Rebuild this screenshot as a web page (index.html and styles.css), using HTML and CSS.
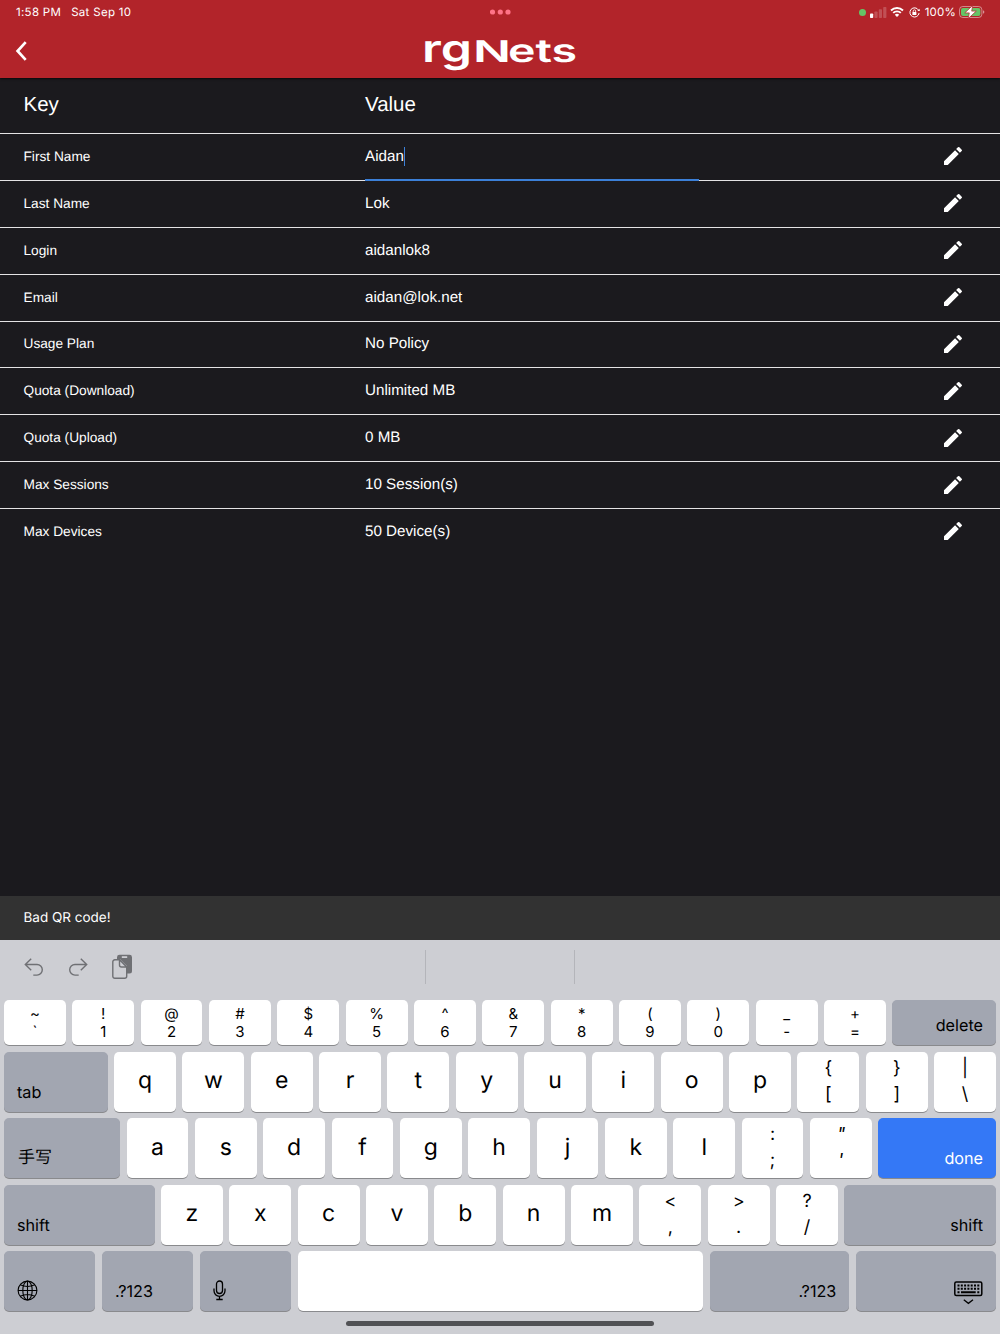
FILE: index.html
```html
<!DOCTYPE html>
<html lang="en">
<head>
<meta charset="UTF-8">
<meta name="viewport" content="width=device-width, initial-scale=1.0">
<title>rgNets</title>
<link rel="stylesheet" href="styles.css">
</head>
<body>
<svg class="defs" width="0" height="0">
    <symbol id="pencil" viewBox="0 0 24 24"><path d="M3 17.25V21h3.75L17.81 9.94l-3.75-3.75L3 17.25zM20.71 7.04a1 1 0 0 0 0-1.41l-2.34-2.34a1 1 0 0 0-1.41 0l-1.83 1.83 3.75 3.75 1.83-1.83z"/></symbol>
</svg>

<header class="top">
    <div class="status">
        <div class="status-left"><span class="time">1:58 PM</span><span class="date">Sat Sep 10</span></div>
        <svg class="dots" width="22" height="6" viewBox="0 0 22 6"><circle cx="2.500" cy="3" r="2.600"/><circle cx="10.300" cy="3" r="2.600"/><circle cx="18" cy="3" r="2.600"/></svg>
        <div class="status-right">
            <span class="camera"></span>
            <svg class="signal" width="17" height="11" viewBox="0 0 17 11"><rect x="0" y="6.5" width="3.2" height="4.5" rx=".8"/><g opacity=".2"><rect x="4.4" y="4.5" width="3.2" height="6.5" rx=".8"/><rect x="8.8" y="2.3" width="3.2" height="8.7" rx=".8"/><rect x="13.2" y="0" width="3.2" height="11" rx=".8"/></g></svg>
            <svg class="wifi" width="14" height="10" viewBox="0 0 14 10"><path d="M1 3.5a8.6 8.6 0 0 1 12 0M3.2 5.9a5.4 5.4 0 0 1 7.6 0" fill="none" stroke="#fff" stroke-width="1.9"/><path d="M7 10 4.8 7.8a3.2 3.2 0 0 1 4.4 0z"/></svg>
            <svg class="lock" width="11" height="11" viewBox="0 0 11 11"><path d="M9.5 3.1A4.6 4.6 0 1 0 10.1 6" fill="none" stroke="#fff" stroke-width="1"/><path d="M8.3 4.1h2.6L10.5 1.7z"/><rect x="3.4" y="4.9" width="4" height="3.1" rx=".5"/><path d="M4.2 5V4a1.2 1.2 0 0 1 2.4 0v1" fill="none" stroke="#fff" stroke-width=".8"/></svg>
            <span class="percent">100%</span>
            <svg class="battery" width="26" height="14" viewBox="0 0 26 14"><rect x=".5" y="1.500" width="22.400" height="11" rx="3.300" fill="none" stroke="#fff" stroke-opacity=".45"/><rect x="2" y="3" width="19.400" height="8" rx="2" fill="#65c466"/><path d="M24 5.200v3.600q1.400-.5 1.400-1.800T24 5.200z" opacity=".5"/><path d="M13.700.4 5.800 7.900h4.500L9.200 13.600l8.100-7.500h-4.600z" stroke="#b2242a" stroke-width=".7"/></svg>
        </div>
    </div>
    <div class="appbar">
        <svg class="back" width="12" height="20" viewBox="0 0 12 20"><path d="M10.700 1.200 2.600 10l8.100 8.800" fill="none" stroke="#fff" stroke-width="2.700"/></svg>
        <svg class="logo" width="154" height="40" viewBox="0 0 154 40">
            <text x="-1" y="30.500" font-size="38" textLength="50" lengthAdjust="spacingAndGlyphs">rg</text>
            <text x="50" y="30.500" font-size="30" textLength="38" lengthAdjust="spacingAndGlyphs">N</text>
            <text x="85" y="30.500" font-size="32" textLength="69" lengthAdjust="spacingAndGlyphs">ets</text>
        </svg>
    </div>
</header>

<main class="table">
    <div class="row head"><span>Key</span><span>Value</span></div>
    <div class="row"><span class="key">First Name</span><span class="value active">Aidan<i class="caret"></i></span><svg class="edit"><use href="#pencil"/></svg></div>
    <div class="row"><span class="key">Last Name</span><span class="value">Lok</span><svg class="edit"><use href="#pencil"/></svg></div>
    <div class="row"><span class="key">Login</span><span class="value">aidanlok8</span><svg class="edit"><use href="#pencil"/></svg></div>
    <div class="row"><span class="key">Email</span><span class="value">aidan@lok.net</span><svg class="edit"><use href="#pencil"/></svg></div>
    <div class="row"><span class="key">Usage Plan</span><span class="value">No Policy</span><svg class="edit"><use href="#pencil"/></svg></div>
    <div class="row"><span class="key">Quota (Download)</span><span class="value">Unlimited MB</span><svg class="edit"><use href="#pencil"/></svg></div>
    <div class="row"><span class="key">Quota (Upload)</span><span class="value">0 MB</span><svg class="edit"><use href="#pencil"/></svg></div>
    <div class="row"><span class="key">Max Sessions</span><span class="value">10 Session(s)</span><svg class="edit"><use href="#pencil"/></svg></div>
    <div class="row"><span class="key">Max Devices</span><span class="value">50 Device(s)</span><svg class="edit"><use href="#pencil"/></svg></div>
</main>

<div class="snackbar">Bad QR code!</div>

<section class="keyboard">
    <div class="tools">
        <div class="tool-icons">
            <svg width="20" height="20" viewBox="0 0 20 20"><path d="M7.2 1.7 1.3 7.500l5.900 5.800M1.500 7.500H13a5.300 5.300 0 0 1 0 10.600H9.300"/></svg>
            <svg width="20" height="20" viewBox="0 0 20 20"><path d="M12.8 1.7 18.700 7.500l-5.900 5.800M18.500 7.500H7a5.300 5.300 0 0 0 0 10.600h3.700"/></svg>
            <svg width="21" height="26" viewBox="0 0 21 26"><path d="M5 5V3.200A2.500 2.500 0 0 1 7.500.8h10A2.500 2.500 0 0 1 20 3.200V17a2.500 2.500 0 0 1-2.500 2.500H15V12L8 5z" fill="#6f7074" stroke="none"/><path d="M9.800 3.100h5.400" stroke="#cdced3" stroke-width="1.800"/><path d="M2.800 5.800h4.700l7.200 7.200v9.300a2 2 0 0 1-2 2H2.800a2 2 0 0 1-2-2V7.800a2 2 0 0 1 2-2z" fill="#cdced3"/><path d="M7.500 5.800V11a2 2 0 0 0 2 2h5.200z" fill="#cdced3"/></svg>
        </div>
        <div class="suggestion"></div>
        <div class="rest"></div>
    </div>
    <div class="keys numbers">
        <div class="k two"><b>~</b><b>`</b></div>
        <div class="k two"><b>!</b><b>1</b></div>
        <div class="k two"><b>@</b><b>2</b></div>
        <div class="k two"><b>#</b><b>3</b></div>
        <div class="k two"><b>$</b><b>4</b></div>
        <div class="k two"><b>%</b><b>5</b></div>
        <div class="k two"><b>^</b><b>6</b></div>
        <div class="k two"><b>&amp;</b><b>7</b></div>
        <div class="k two"><b>*</b><b>8</b></div>
        <div class="k two"><b>(</b><b>9</b></div>
        <div class="k two"><b>)</b><b>0</b></div>
        <div class="k two"><b>_</b><b>-</b></div>
        <div class="k two"><b>+</b><b>=</b></div>
        <div class="k dark right fill">delete</div>
    </div>
    <div class="keys">
        <div class="k dark tab">tab</div>
        <div class="k">q</div>
        <div class="k">w</div>
        <div class="k">e</div>
        <div class="k">r</div>
        <div class="k">t</div>
        <div class="k">y</div>
        <div class="k">u</div>
        <div class="k">i</div>
        <div class="k">o</div>
        <div class="k">p</div>
        <div class="k two"><b>{</b><b>[</b></div>
        <div class="k two"><b>}</b><b>]</b></div>
        <div class="k two"><b>|</b><b>\</b></div>
    </div>
    <div class="keys">
        <div class="k dark hand">手写</div>
        <div class="k">a</div>
        <div class="k">s</div>
        <div class="k">d</div>
        <div class="k">f</div>
        <div class="k">g</div>
        <div class="k">h</div>
        <div class="k">j</div>
        <div class="k">k</div>
        <div class="k">l</div>
        <div class="k two"><b>:</b><b>;</b></div>
        <div class="k two slant"><b>"</b><b>'</b></div>
        <div class="k dark right done fill">done</div>
    </div>
    <div class="keys">
        <div class="k dark shift">shift</div>
        <div class="k">z</div>
        <div class="k">x</div>
        <div class="k">c</div>
        <div class="k">v</div>
        <div class="k">b</div>
        <div class="k">n</div>
        <div class="k">m</div>
        <div class="k two"><b>&lt;</b><b>,</b></div>
        <div class="k two"><b>&gt;</b><b>.</b></div>
        <div class="k two"><b>?</b><b>/</b></div>
        <div class="k dark right fill">shift</div>
    </div>
    <div class="keys">
        <div class="k dark small"><svg width="21" height="21" viewBox="0 0 21 21" fill="none" stroke="#000" stroke-width="1.1"><circle cx="10.500" cy="10.500" r="9.400"/><ellipse cx="10.500" cy="10.500" rx="4.700" ry="9.400"/><path d="M10.500 1v19M1 10.500h19M3.200 4.800q7.300 3.500 14.600 0M3.200 16.200q7.300-3.500 14.600 0"/></svg></div>
        <div class="k dark small">.?123</div>
        <div class="k dark small"><svg width="13" height="21" viewBox="0 0 13 21" fill="none" stroke="#000" stroke-width="1.300"><rect x="3.500" y="1" width="6" height="12.500" rx="3"/><path d="M1 8.500v2.300a5.500 5.500 0 0 0 11 0V8.500M6.500 16.300V19.500M3.300 19.500h6.400"/></svg></div>
        <div class="k space"></div>
        <div class="k dark right wide">.?123</div>
        <div class="k dark right fill"><svg class="hide" width="29" height="24" viewBox="0 0 29 24" fill="none" stroke="#000"><rect x=".8" y="1" width="27" height="13.600" rx="1.500" stroke-width="1.500"/><path d="M3.500 4.500h22M3.500 7.800h22" stroke-width="1.900" stroke-dasharray="2 1.300"/><path d="M3.500 11.300h2M7 11.300h14.700M23.300 11.300h2" stroke-width="1.900"/><path d="m9.800 18.700 4.600 3.600 4.600-3.600" stroke-width="1.300"/></svg></div>
    </div>
    <div class="home"></div>
</section>
</body>
</html>
```
FILE: styles.css
```css
* {
    box-sizing: border-box;
}
body {
    margin: 0;
    width: 1000px;
    height: 1334px;
    display: flex;
    flex-direction: column;
    overflow: hidden;
    background-color: #1b1a1e;
    color: #fff;
    font-family: "Liberation Sans", Arial, sans-serif;
    text-rendering: geometricPrecision;
}
svg {
    display: block;
    flex: none;
}
.defs {
    position: absolute;
}
/* Header */
.top {
    height: 78px;
    flex: none;
    background-color: #b2242a;
    box-shadow: 0 1px 2px rgba(0, 0, 0, 0.7);
}
.status {
    height: 24px;
    display: grid;
    grid-template-columns: 1fr 22px 1fr;
    align-items: center;
    padding: 0 15px 0 16px;
    font-family: Inter, sans-serif;
    font-size: 11.5px;
    fill: #fff;
}
.status-left {
    display: flex;
    gap: 10px;
}
.time {
    letter-spacing: 0.3px;
}
.date {
    letter-spacing: 0.3px;
}
.dots {
    fill: #ff7387;
}
.status-right {
    display: flex;
    align-items: center;
    justify-content: flex-end;
}
.camera {
    width: 7px;
    height: 7px;
    border-radius: 50%;
    background-color: #65c466;
    margin-right: 4px;
}
.signal {
    margin-right: 3px;
}
.wifi {
    margin-right: 5px;
}
.lock {
    margin-right: 5px;
}
.percent {
    margin-right: 3px;
    letter-spacing: 0.2px;
}
.appbar {
    height: 54px;
    display: grid;
    grid-template-columns: 1fr 154px 1fr;
    align-items: center;
    padding: 0 15px;
}
.logo {
    grid-column: 2;
    overflow: visible;
    fill: #fff;
    font-family: Inter, sans-serif;
    font-weight: 600;
}
/* Account table */
.table {
    flex: 1;
}
.row {
    height: 46.875px;
    display: grid;
    grid-template-columns: 341.5px 334px 1fr;
    align-items: center;
    padding: 0 37px 0 23.5px;
    border-top: 1px solid #e4e3e5;
}
.row.head {
    height: 55px;
    padding-bottom: 1px;
    border-top: none;
    font-size: 20.5px;
}
.key {
    padding-bottom: 1px;
    font-size: 13.7px;
}
.value {
    position: relative;
    height: 100%;
    display: flex;
    align-items: center;
    padding-bottom: 1px;
    font-size: 15.2px;
}
.value.active::after {
    content: "";
    position: absolute;
    left: 0;
    right: 0;
    bottom: -1px;
    height: 2px;
    background-color: #3c80d8;
}
.caret {
    width: 1.5px;
    height: 19px;
    background-color: #3c80d8;
}
.edit {
    width: 24px;
    height: 24px;
    margin: 0 -2px 1px 0;
    justify-self: end;
    fill: #fff;
}
.snackbar {
    height: 44px;
    flex: none;
    padding: 0 23.5px;
    line-height: 44px;
    background-color: #323232;
    font-family: Inter, sans-serif;
    font-size: 13.5px;
}
/* Keyboard */
.keyboard {
    height: 394px;
    flex: none;
    padding: 0 4px;
    background-color: #cdced3;
    color: #000;
    font-family: Inter, "Noto Sans CJK SC", sans-serif;
}
.tools {
    height: 60px;
    display: grid;
    grid-template-columns: 421px 150px 1fr;
    padding: 10px 0 16px;
}
.tool-icons {
    display: flex;
    align-items: center;
    gap: 24px;
    padding-left: 20px;
    fill: none;
    stroke: #6f7074;
    stroke-width: 1.4;
}
.suggestion {
    border-left: 1px solid #b4b5ba;
    border-right: 1px solid #b4b5ba;
}
.keys {
    height: 60px;
    display: flex;
    gap: 6.55px;
    margin-bottom: 6.5px;
}
.keys.numbers {
    height: 45px;
}
.k {
    width: 61.8px;
    flex: none;
    display: flex;
    align-items: center;
    justify-content: center;
    padding-bottom: 3px;
    border-radius: 5px;
    background-color: #fff;
    box-shadow: 0 1px 0 #898a8d;
    font-size: 23px;
}
.k.two {
    flex-direction: column;
    justify-content: space-between;
    padding: 4px 0 5px;
    font-size: 18px;
    line-height: 25px;
}
.two b {
    font-weight: normal;
}
.numbers .two {
    padding: 5px 0;
    font-size: 15px;
    line-height: 17.5px;
}
.slant b {
    transform: skewX(-10deg);
}
.k.dark {
    align-items: flex-end;
    justify-content: flex-start;
    padding: 0 13px 10px;
    background-color: #a2a6b1;
    font-size: 16.2px;
    line-height: 20px;
}
.k.right {
    justify-content: flex-end;
}
.k.fill {
    flex: 1;
}
.k.done {
    background-color: #3478f6;
    color: #fff;
}
.k.tab {
    width: 103.5px;
}
.k.hand {
    width: 116px;
    padding-left: 14px;
    font-size: 17px;
}
.k.shift {
    width: 150.5px;
}
.k.small {
    width: 91.4px;
}
.k.space {
    width: 405.5px;
}
.k.wide {
    width: 139.5px;
}
.k .hide {
    margin-bottom: -4px;
}
.home {
    width: 308px;
    height: 5px;
    margin: 10px auto 0;
    border-radius: 3px;
    background-color: #515255;
}
```
